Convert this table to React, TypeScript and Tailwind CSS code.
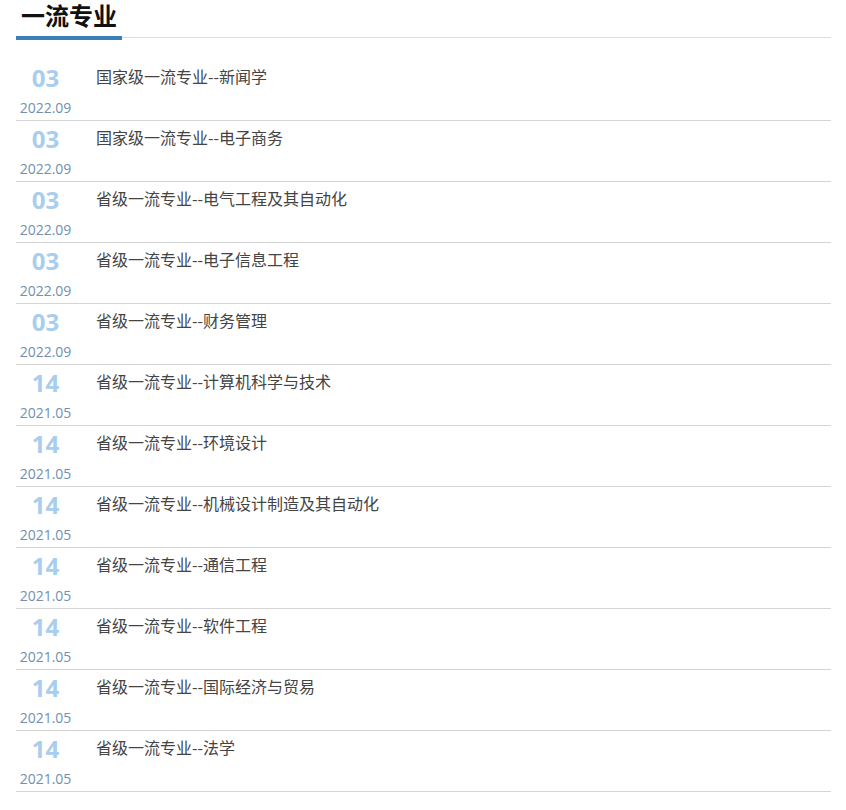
const items = [
  { day: "03", date: "2022.09", title: "国家级一流专业--新闻学" },
  { day: "03", date: "2022.09", title: "国家级一流专业--电子商务" },
  { day: "03", date: "2022.09", title: "省级一流专业--电气工程及其自动化" },
  { day: "03", date: "2022.09", title: "省级一流专业--电子信息工程" },
  { day: "03", date: "2022.09", title: "省级一流专业--财务管理" },
  { day: "14", date: "2021.05", title: "省级一流专业--计算机科学与技术" },
  { day: "14", date: "2021.05", title: "省级一流专业--环境设计" },
  { day: "14", date: "2021.05", title: "省级一流专业--机械设计制造及其自动化" },
  { day: "14", date: "2021.05", title: "省级一流专业--通信工程" },
  { day: "14", date: "2021.05", title: "省级一流专业--软件工程" },
  { day: "14", date: "2021.05", title: "省级一流专业--国际经济与贸易" },
  { day: "14", date: "2021.05", title: "省级一流专业--法学" },
];

function NewsRow({ day, date, title }: { day: string; date: string; title: string }) {
  return (
    <li className="flex items-start h-[61px] border-b border-[#d4d4d4]">
      <div className="w-[59px] flex flex-col items-center">
        <span className="pt-[4px] text-[24px] leading-[28px] font-bold text-[#a8cdee]">{day}</span>
        <span className="mt-[6px] text-[14px] leading-[20px] text-[#7090b0]">{date}</span>
      </div>
      <a
        href="#"
        className="ml-[21px] pt-[2px] text-[16px] leading-[28px] text-[#444] font-['Noto_Sans_CJK_SC',sans-serif]"
      >
        {title}
      </a>
    </li>
  );
}

export default function App() {
  return (
    <div
      className="min-h-[810px] bg-white px-4 w-[847px]"
      style={{ fontFamily: '"Open Sans", "Noto Sans CJK SC", sans-serif' }}
    >
      <div className="w-[815px]">
        <div className="flex border-b border-[#dcdcdc]">
          <h2 className="-mb-[3px] pl-[5px] pr-[5px] pb-[4px] border-b-4 border-[#3a7fb6] text-[24px] leading-[32px] font-bold text-[#111]">
            一流专业
          </h2>
        </div>
        <ul className="mt-[22px]">
          {items.map((it, i) => (
            <NewsRow key={i} {...it} />
          ))}
        </ul>
      </div>
    </div>
  );
}
